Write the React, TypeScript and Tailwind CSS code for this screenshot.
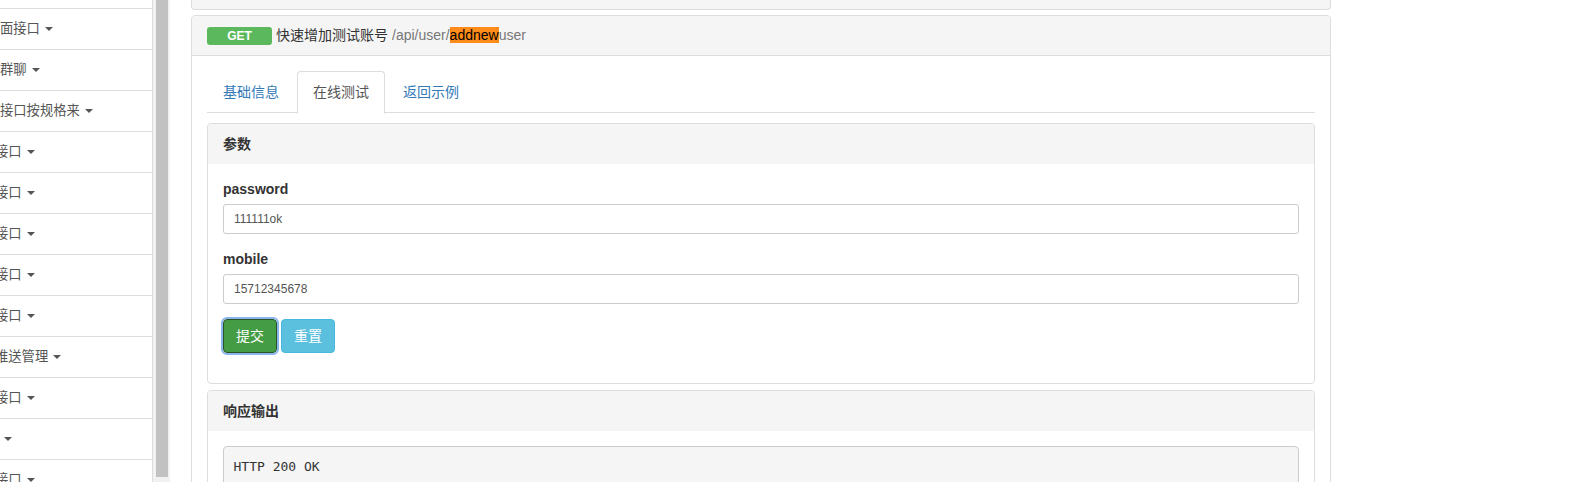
import { useState } from 'react';

const cjk = { fontFamily: '"Liberation Sans", "Noto Sans CJK SC", sans-serif' };
const mono = { fontFamily: '"DejaVu Sans Mono", "Liberation Mono", monospace' };

// sidebar rows; the menu is scrolled sideways, so some labels start left of the edge
const menuRows = [
  { label: '', shift: 'ml-0', caret: false },
  { label: '面接口', shift: 'ml-0', caret: true },
  { label: '群聊', shift: 'ml-0', caret: true },
  { label: '接口按规格来', shift: 'ml-0', caret: true },
  { label: '接口', shift: '-ml-[5px]', caret: true },
  { label: '接口', shift: '-ml-[5px]', caret: true },
  { label: '接口', shift: '-ml-[5px]', caret: true },
  { label: '接口', shift: '-ml-[5px]', caret: true },
  { label: '接口', shift: '-ml-[5px]', caret: true },
  { label: '推送管理', shift: '-ml-[5px]', caret: true },
  { label: '接口', shift: '-ml-[5px]', caret: true },
  { label: '', shift: '-ml-[1px]', caret: true },
  { label: '接口', shift: '-ml-[5px]', caret: true },
];

function Caret() {
  return (
    <span className="inline-block ml-[5px] w-0 h-0 border-l-[4px] border-r-[4px] border-t-[4px] border-l-transparent border-r-transparent border-t-[#555] align-middle" />
  );
}

function Sidebar() {
  return (
    <div className="w-[153px] shrink-0 h-full overflow-hidden border-r border-[#ddd] bg-white">
      {menuRows.map((row, i) => (
        <div
          key={i}
          className={[
            'flex items-center border-b border-[#ddd] text-[13.3px] text-[#555] whitespace-nowrap',
            i === 0 ? 'h-[9px]' : 'h-[41px]',
          ].join(' ')}
        >
          {i > 0 && (
            <span className={['flex items-center', row.shift].join(' ')}>
              {row.label}
              <Caret />
            </span>
          )}
        </div>
      ))}
    </div>
  );
}

function Scrollbar() {
  return (
    <div className="w-[17px] shrink-0 h-full bg-[#f1f1f1] pl-[3px] pr-[2px]">
      <div className="w-[12px] h-[477px] bg-[#c1c1c1]" />
    </div>
  );
}

function Tabs() {
  const tabs = ['基础信息', '在线测试', '返回示例'];
  return (
    <ul className="flex border-b border-[#ddd] h-[42px]">
      {tabs.map((t, i) => (
        <li key={t} className="mr-[2px] -mb-px">
          <span
            className={[
              'block px-[15px] py-[10px] leading-[21px] border rounded-t-[4px] text-[14px]',
              i === 1
                ? 'border-[#ddd] border-b-transparent bg-white text-[#555]'
                : 'border-transparent text-[#337ab7]',
            ].join(' ')}
          >
            {t}
          </span>
        </li>
      ))}
    </ul>
  );
}

function Field({ label, value }: { label: string; value: string }) {
  return (
    <div className="mb-[15px]">
      <label className="block mb-[5px] text-[14px] leading-[20px] font-bold text-[#333]">{label}</label>
      <div className="h-[30px] flex items-center px-[10px] border border-[#ccc] rounded-[3px] text-[12px] text-[#555] bg-white">
        {value}
      </div>
    </div>
  );
}

function ParamsPanel() {
  return (
    <div className="mt-[10px] border border-[#ddd] rounded-[4px] bg-white">
      <div className="px-[15px] py-[10px] leading-[20px] bg-[#f5f5f5] rounded-t-[3px] text-[14px] font-bold text-[#333]">
        参数
      </div>
      <div className="p-[15px]">
        <Field label="password" value="111111ok" />
        <Field label="mobile" value="15712345678" />
        <div className="mb-[15px] flex gap-[4px]">
          <button className="h-[34px] px-[12px] text-[14px] text-white bg-[#449d44] border border-[#255625] rounded-[4px] outline-2 outline-[#8cb4ea]">
            提交
          </button>
          <button className="h-[34px] px-[12px] text-[14px] text-white bg-[#5bc0de] border border-[#46b8da] rounded-[4px]">
            重置
          </button>
        </div>
      </div>
    </div>
  );
}

function ResponsePanel() {
  return (
    <div className="mt-[6px] border border-[#ddd] rounded-[4px] bg-white">
      <div className="px-[15px] py-[10px] leading-[20px] bg-[#f5f5f5] rounded-t-[3px] text-[14px] font-bold text-[#333]">
        响应输出
      </div>
      <div className="p-[15px]">
        <pre
          className="p-[9.5px] bg-[#f5f5f5] border border-[#ccc] rounded-[4px] text-[13px] leading-[20px] text-[#333] h-[80px]"
          style={mono}
        >
          HTTP 200 OK
        </pre>
      </div>
    </div>
  );
}

export default function App() {
  const [open] = useState(true);

  return (
    <div className="h-[482px] w-[1574px] overflow-hidden flex bg-white" style={cjk}>
      <Sidebar />
      <Scrollbar />

      {/* Main */}
      <div className="pl-[21px] w-[1161px] shrink-0">
        <div className="h-[10px] border border-t-0 border-[#ddd] rounded-b-[4px] bg-[#f5f5f5]" />

        <div className="mt-[5px] border border-[#ddd] rounded-[4px] bg-white">
          <div className="h-[40px] px-[15px] flex items-center border-b border-[#ddd] bg-[#f5f5f5] rounded-t-[3px]">
            <span className="w-[65px] h-[18px] flex items-center justify-center rounded-[3px] bg-[#5cb85c] text-white text-[12px] font-bold">
              GET
            </span>
            <span className="ml-[4px] text-[14px] text-[#333]">快速增加测试账号</span>
            <span className="ml-[4px] text-[14px] text-[#777]">
              /api/user/<span className="bg-[#ff8c1a] text-black">addnew</span>user
            </span>
          </div>
          {open && (
            <div className="p-[15px]">
              <Tabs />
              <ParamsPanel />
              <ResponsePanel />
            </div>
          )}
        </div>
      </div>
    </div>
  );
}
